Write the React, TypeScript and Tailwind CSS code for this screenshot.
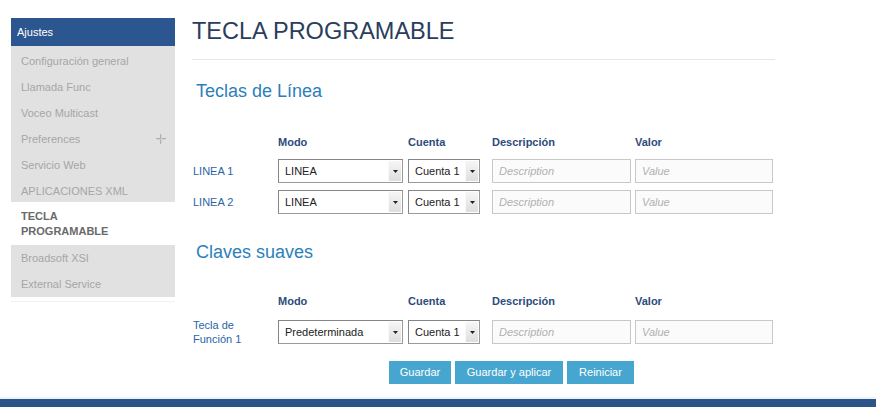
import { Fragment } from 'react'

const menu = [
    'Configuración general',
    'Llamada Func',
    'Voceo Multicast',
    'Preferences',
    'Servicio Web',
    'APLICACIONES XML',
]

function Arrow() {
    return (
        <div className="flex h-[20px] w-[13px] items-center justify-center bg-gradient-to-b from-[#f6f6f6] to-[#dedede] border-l border-[#f9f9f9]">
            <svg width="5" height="3" viewBox="0 0 5 3">
                <path d="M0 0 H5 L2.5 3 Z" fill="#222" />
            </svg>
        </div>
    )
}

function Select({ value, width }: { value: string; width: string }) {
    return (
        <div className={`flex h-[24px] items-center justify-between border border-[#9a9a9a] border-t-[#858585] border-l-[#858585] bg-white pr-[1px] ${width}`}>
            <span className="pl-[6px] text-[11px] text-[#222]">{value}</span>
            <Arrow />
        </div>
    )
}

function Field({ placeholder, width }: { placeholder: string; width: string }) {
    return (
        <div className={`flex h-[24px] items-center border border-[#c8c8c8] bg-[#fbfbfb] pl-[6px] ${width}`}>
            <span className="text-[11px] italic text-[#b0b0b0]">{placeholder}</span>
        </div>
    )
}

function Headers() {
    return (
        <div className="ml-[1px] flex text-[11px] font-bold leading-[13px] text-[#2d4b7c]">
            <div className="w-[85px]" />
            <div className="w-[130px]">Modo</div>
            <div className="w-[84px]">Cuenta</div>
            <div className="w-[143px]">Descripción</div>
            <div>Valor</div>
        </div>
    )
}

function Row({ label, mode }: { label: React.ReactNode; mode: string }) {
    return (
        <div className="ml-[1px] flex items-center">
            <div className="w-[85px] text-[11px] leading-[14px] text-[#2b64a6]">{label}</div>
            <Select value={mode} width="w-[125px]" />
            <div className="w-[5px]" />
            <Select value="Cuenta 1" width="w-[72px]" />
            <div className="w-[12px]" />
            <Field placeholder="Description" width="w-[139px]" />
            <div className="w-[4px]" />
            <Field placeholder="Value" width="w-[138px]" />
        </div>
    )
}

export default function App() {
    return (
        <div className="flex h-[407px] w-full flex-col overflow-hidden bg-white font-['Liberation_Sans',Arial,sans-serif]">
            <div className="flex h-[397px] shrink-0 pt-[18px]">
                {/* sidebar */}
                <div className="ml-[11px] w-[164px]">
                    <div className="flex h-[28px] items-center bg-[#2c5690] pl-[6px] text-[11px] text-white">Ajustes</div>
                    <div className="bg-[#e1e1e1]">
                        {menu.map((m) => (
                            <div key={m} className="flex h-[26px] items-center justify-between pl-[10px] pr-[9px] pt-[4px] text-[11px] text-[#a6a6a6]">
                                <span>{m}</span>
                                {m === 'Preferences' && (
                                    <svg width="10" height="10" viewBox="0 0 10 10">
                                        <path d="M4.5 0V10M0 4.5H10" stroke="#b0b0b0" strokeWidth="1" />
                                        <path d="M5.5 1V9M1 5.5H9" stroke="#d0d0d0" strokeWidth="1" />
                                    </svg>
                                )}
                            </div>
                        ))}
                    </div>
                    <div className="h-[43px] bg-white pl-[10px] pt-[7px] text-[11px] font-bold leading-[15px] text-[#6a6a6a]">
                        TECLA
                        <br />
                        PROGRAMABLE
                    </div>
                    <div className="bg-[#e1e1e1]">
                        {['Broadsoft XSI', 'External Service'].map((m) => (
                            <div key={m} className="flex h-[26px] items-center pl-[10px] pt-[1px] text-[11px] text-[#a6a6a6]">
                                {m}
                            </div>
                        ))}
                    </div>
                    <div className="mt-[4px] h-px bg-[#f0f0f0]" />
                </div>

                {/* main */}
                <div className="ml-[17px] w-[583px]">
                    <h1 className="text-[23.5px] leading-[26px] text-[#2a3d5c]">TECLA PROGRAMABLE</h1>
                    <div className="mt-[15px] h-px bg-[#e6e6e6]" />

                    <h2 className="ml-[4px] mt-[21px] text-[18px] leading-[21px] text-[#2b7fba]">Teclas de Línea</h2>
                    <div className="mt-[34px]">
                        <Headers />
                    </div>
                    <div className="mt-[10px] flex flex-col gap-[7px]">
                        {['LINEA 1', 'LINEA 2'].map((l) => (
                            <Fragment key={l}>
                                <Row label={l} mode="LINEA" />
                            </Fragment>
                        ))}
                    </div>

                    <h2 className="ml-[4px] mt-[28px] text-[18px] leading-[21px] text-[#2b7fba]">Claves suaves</h2>
                    <div className="mt-[32px]">
                        <Headers />
                    </div>
                    <div className="mt-[10px]">
                        <Row
                            label={
                                <>
                                    Tecla de
                                    <br />
                                    Función 1
                                </>
                            }
                            mode="Predeterminada"
                        />
                    </div>

                    <div className="ml-[197px] mt-[15px] flex gap-[4px] text-[11px] text-white">
                        <button className="h-[23px] w-[62px] bg-[#47a6d0]">Guardar</button>
                        <button className="h-[23px] w-[108px] bg-[#47a6d0]">Guardar y aplicar</button>
                        <button className="h-[23px] w-[67px] bg-[#47a6d0]">Reiniciar</button>
                    </div>
                </div>
            </div>
            <div className="h-[2px] shrink-0 bg-[#eaf5fb]" />
            <div className="h-[40px] shrink-0 bg-[#2b5488]" />
        </div>
    )
}
